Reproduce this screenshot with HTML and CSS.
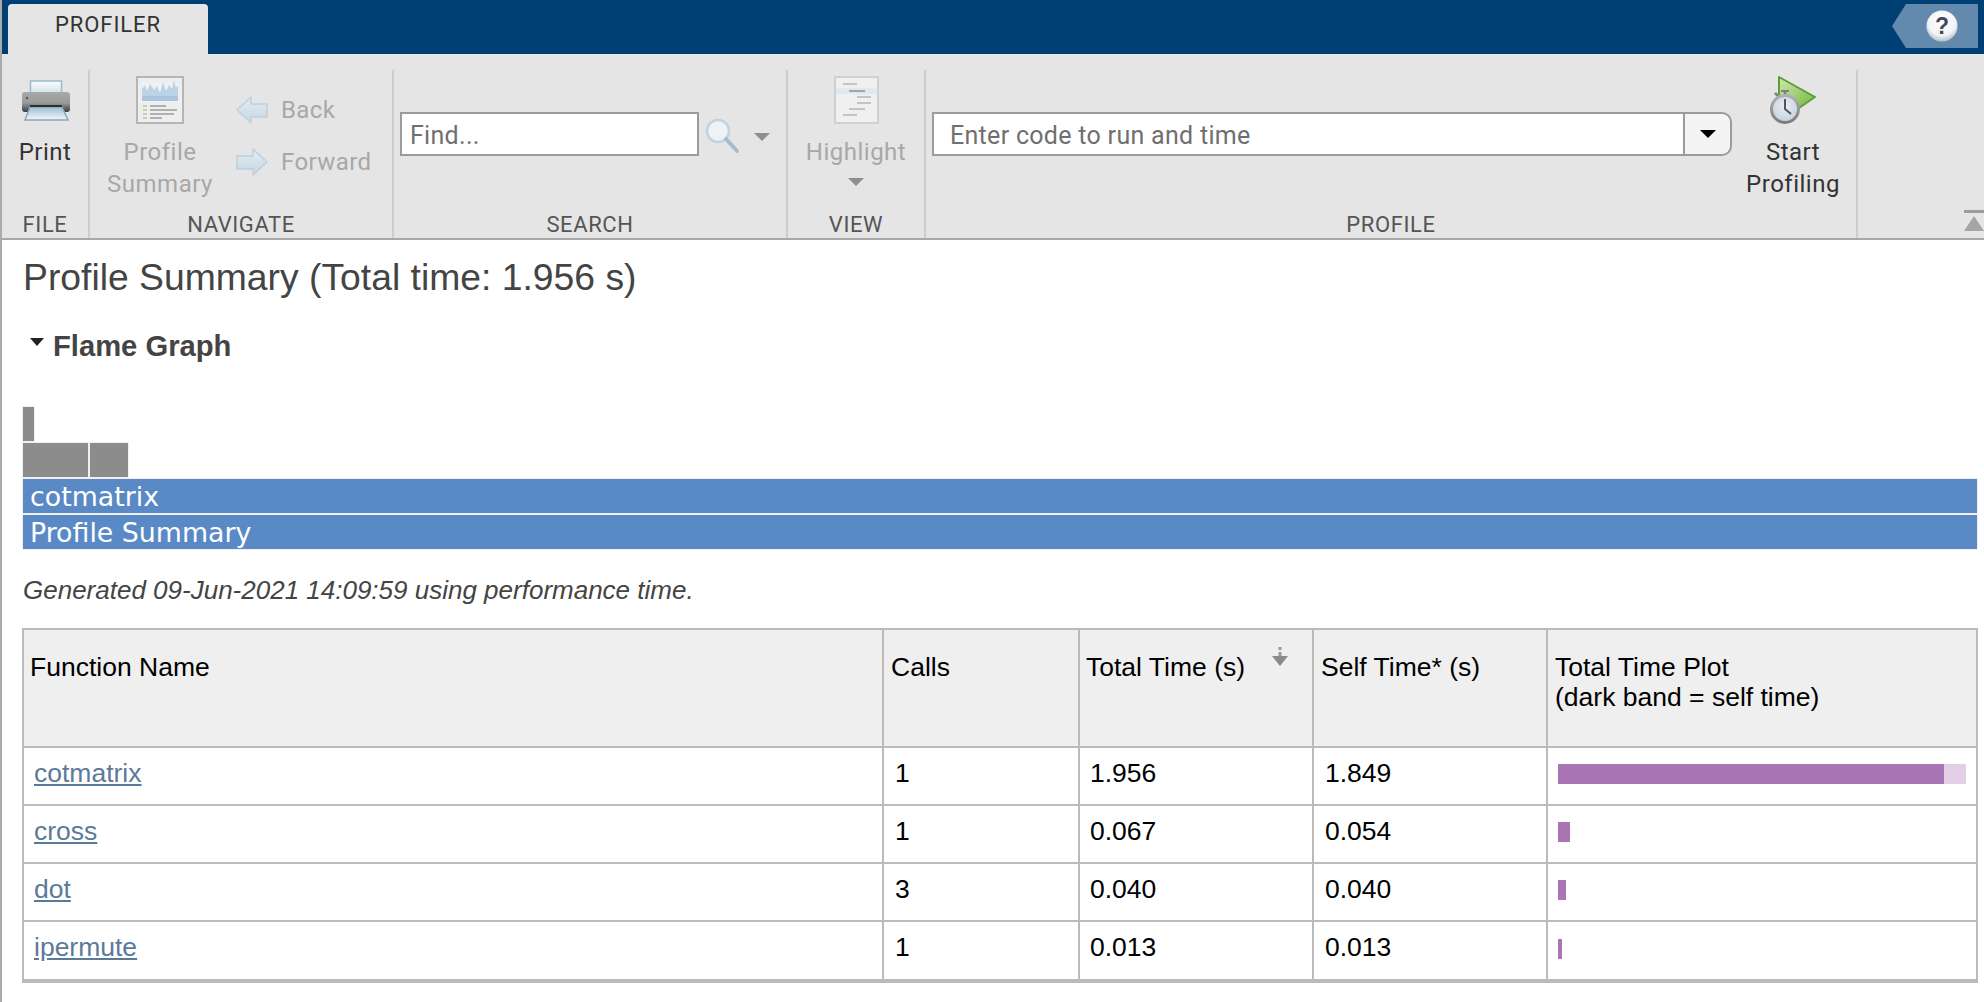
FILE: index.html
```html
<!DOCTYPE html>
<html lang="en">
<head>
    <meta charset="UTF-8">
    <meta name="viewport" content="width=device-width, initial-scale=1.0">
    <title>Profiler</title>
    <link rel="stylesheet" href="styles.css">
</head>
<body>

    <div class="topbar">
        <div class="tab">PROFILER</div>
        <div class="help">
            <svg width="86" height="44" viewBox="0 0 86 44">
                <defs>
                    <radialGradient id="helpBall" cx="50%" cy="35%" r="70%">
                        <stop offset="0" stop-color="#ffffff"/>
                        <stop offset="0.65" stop-color="#f2f3f5"/>
                        <stop offset="1" stop-color="#a9b2bf"/>
                    </radialGradient>
                </defs>
                <path d="M14 0H86V44H14L0 22Z" fill="#6389ad"/>
                <circle cx="50" cy="22" r="15.5" fill="url(#helpBall)"/>
                <text x="50" y="30" class="help-mark">?</text>
            </svg>
        </div>
    </div>

    <div class="ribbon">
        <!-- File -->
        <div class="section sec-file">
            <div class="sec-body">
                <div class="big-btn">
                    <div class="big-icon">
                        <svg width="48" height="41" viewBox="0 0 48 41">
                            <defs>
                                <linearGradient id="printerBody" x1="0" y1="0" x2="0" y2="1">
                                    <stop offset="0" stop-color="#a9a9a9"/>
                                    <stop offset="0.55" stop-color="#9a9a9a"/>
                                    <stop offset="1" stop-color="#3c3c3c"/>
                                </linearGradient>
                                <linearGradient id="printerPaper" x1="0" y1="0" x2="0" y2="1">
                                    <stop offset="0" stop-color="#9dbdd2"/>
                                    <stop offset="1" stop-color="#f2f7fa"/>
                                </linearGradient>
                                <linearGradient id="printerSheet" x1="0" y1="0" x2="0" y2="1">
                                    <stop offset="0" stop-color="#fafcfd"/>
                                    <stop offset="1" stop-color="#d3e2ec"/>
                                </linearGradient>
                            </defs>
                            <path d="M8.5 1H39.5V13H8.5Z" fill="url(#printerSheet)" stroke="#9db9cc" stroke-width="1.5"/>
                            <path d="M3 12H45Q48 12 48 15V29Q48 32 45 32H3Q0 32 0 29V15Q0 12 3 12Z" fill="url(#printerBody)"/>
                            <circle cx="5" cy="18" r="1.2" fill="#555"/>
                            <path d="M8 27H40L46 40H3Z" fill="url(#printerPaper)" stroke="#88a6ba" stroke-width="1.5"/>
                            <path d="M8 26H40" stroke="#2f2f2f" stroke-width="2"/>
                        </svg>
                    </div>
                    <div class="btn-text">Print</div>
                </div>
            </div>
            <div class="sec-label">FILE</div>
        </div>

        <!-- Navigate -->
        <div class="section sec-nav">
            <div class="sec-body nav-body">
                <div class="big-btn summary-btn disabled">
                    <div class="big-icon">
                        <svg width="48" height="48" viewBox="0 0 48 48">
                            <rect x="1" y="1" width="46" height="46" fill="#eeeeee" stroke="#b5b5b5" stroke-width="2"/>
                            <path d="M6 7H42V26H6Z" fill="#eef2f5"/>
                            <path d="M6 25V13L9 9L11 15L14 8L18 14L21 10L24 17L27 6L30 15L33 9L36 13L38 4L40 12L42 9V25Z" fill="#bcd2e5"/>
                            <path d="M6 20H42V25H6Z" fill="#a9c6de"/>
                            <path d="M7 30H11M7 34H11M7 38H11M7 42H11" stroke="#b6d8a8" stroke-width="2"/>
                            <path d="M14 30H30M14 34H41M14 38H38M14 42H26" stroke="#b0b0b0" stroke-width="2"/>
                        </svg>
                    </div>
                    <div class="btn-text">Profile<br>Summary</div>
                </div>
                <div class="nav-list">
                    <div class="nav-item disabled">
                        <svg width="32" height="28" viewBox="0 0 32 28">
                            <defs>
                                <linearGradient id="arrowFill" x1="0" y1="0" x2="0" y2="1">
                                    <stop offset="0" stop-color="#e4edf3"/>
                                    <stop offset="1" stop-color="#c3d6e4"/>
                                </linearGradient>
                            </defs>
                            <path d="M1 14L15 1V8H31V21H15V27Z" fill="url(#arrowFill)" stroke="#bfd0dc" stroke-width="1.5" stroke-linejoin="round"/>
                        </svg>
                        <span>Back</span>
                    </div>
                    <div class="nav-item disabled">
                        <svg width="32" height="28" viewBox="0 0 32 28">
                            <path d="M31 14L17 1V8H1V21H17V27Z" fill="url(#arrowFill)" stroke="#bfd0dc" stroke-width="1.5" stroke-linejoin="round"/>
                        </svg>
                        <span>Forward</span>
                    </div>
                </div>
            </div>
            <div class="sec-label">NAVIGATE</div>
        </div>

        <!-- Search -->
        <div class="section sec-search">
            <div class="sec-body search-body">
                <div class="find-box">Find...</div>
                <svg class="lens" width="34" height="36" viewBox="0 0 34 36">
                    <circle cx="13" cy="13" r="11" fill="#edf2f6" stroke="#c3d2de" stroke-width="2.5"/>
                    <path d="M21 21L32 33" stroke="#a6bccd" stroke-width="4" stroke-linecap="round"/>
                </svg>
                <span class="caret-grey search-caret"></span>
            </div>
            <div class="sec-label">SEARCH</div>
        </div>

        <!-- View -->
        <div class="section sec-view">
            <div class="sec-body">
                <div class="big-btn disabled">
                    <div class="big-icon">
                        <svg width="45" height="48" viewBox="0 0 45 48">
                            <rect x="1" y="1" width="43" height="46" fill="#f0f0f0" stroke="#d0d0d0" stroke-width="2"/>
                            <rect x="2" y="12" width="41" height="6" fill="#dfe9f0"/>
                            <path d="M9 8H23M23 21H37M23 27H37M15 33H31M9 39H23" stroke="#c4c4c4" stroke-width="2"/>
                            <path d="M15 15H31" stroke="#a4a4a4" stroke-width="2"/>
                        </svg>
                    </div>
                    <div class="btn-text">Highlight</div>
                    <span class="caret-grey view-caret"></span>
                </div>
            </div>
            <div class="sec-label">VIEW</div>
        </div>

        <!-- Profile -->
        <div class="section sec-profile">
            <div class="sec-body profile-body">
                <div class="code-box">
                    <div class="code-input">Enter code to run and time</div>
                    <div class="code-drop"><span class="caret-black"></span></div>
                </div>
                <div class="big-btn start-btn">
                    <div class="big-icon">
                        <svg width="46" height="48" viewBox="0 0 46 48">
                            <defs>
                                <linearGradient id="playFill" x1="0" y1="0" x2="1" y2="1">
                                    <stop offset="0" stop-color="#cfe9ac"/>
                                    <stop offset="1" stop-color="#74b542"/>
                                </linearGradient>
                                <radialGradient id="clockFace" cx="50%" cy="40%" r="60%">
                                    <stop offset="0" stop-color="#e6edf4"/>
                                    <stop offset="1" stop-color="#c3d2e1"/>
                                </radialGradient>
                                <linearGradient id="clockRing" x1="0" y1="0" x2="0" y2="1">
                                    <stop offset="0" stop-color="#b0b0b0"/>
                                    <stop offset="1" stop-color="#7c7c7c"/>
                                </linearGradient>
                            </defs>
                            <path d="M9 1L45 21L29 32H9Z" fill="url(#playFill)" stroke="#5d9e35" stroke-width="2" stroke-linejoin="round"/>
                            <path d="M15 15V20M5 17L8 20" stroke="#808080" stroke-width="2.5"/>
                            <path d="M11 15H19" stroke="#808080" stroke-width="2"/>
                            <circle cx="15" cy="33" r="13.5" fill="url(#clockFace)" stroke="url(#clockRing)" stroke-width="3"/>
                            <path d="M15 23V33L21 38" fill="none" stroke="#555" stroke-width="2"/>
                        </svg>
                    </div>
                    <div class="btn-text">Start<br>Profiling</div>
                </div>
            </div>
            <div class="sec-label">PROFILE</div>
        </div>

        <div class="sec-end">
            <svg width="20" height="21" viewBox="0 0 20 21">
                <rect x="0" y="0" width="20" height="3" fill="#9c9c9c"/>
                <path d="M10 6L20 21H0Z" fill="#a5a5a5"/>
            </svg>
        </div>
    </div>

    <div class="report">
        <h1>Profile Summary (Total time: 1.956 s)</h1>
        <h2><span class="twisty"></span>Flame Graph</h2>

        <div class="flame">
            <div class="flame-row"><div class="flame-cell grey w-a"></div></div>
            <div class="flame-row">
                <div class="flame-cell grey w-b"></div>
                <div class="flame-cell grey w-c"></div>
            </div>
            <div class="flame-row"><div class="flame-cell blue">cotmatrix</div></div>
            <div class="flame-row"><div class="flame-cell blue">Profile Summary</div></div>
        </div>

        <p class="generated">Generated 09-Jun-2021 14:09:59 using performance time.</p>

        <table class="results">
            <colgroup>
                <col class="col-name">
                <col class="col-calls">
                <col class="col-time">
                <col class="col-time">
                <col>
            </colgroup>
            <thead>
                <tr>
                    <th>Function Name</th>
                    <th>Calls</th>
                    <th class="sorted">Total Time (s)
                        <svg class="sort-arrow" width="16" height="20" viewBox="0 0 16 20">
                            <path d="M8 0V3M8 5V10" stroke="#9a9a9a" stroke-width="3"/>
                            <path d="M0 9H16L8 19Z" fill="#8a8a8a"/>
                        </svg>
                    </th>
                    <th>Self Time* (s)</th>
                    <th>Total Time Plot<br>(dark band = self time)</th>
                </tr>
            </thead>
            <tbody>
                <tr>
                    <td><a href="#">cotmatrix</a></td>
                    <td>1</td>
                    <td>1.956</td>
                    <td>1.849</td>
                    <td class="plot"><div class="bar"><span class="dark" style="width:386px"></span><span class="light" style="width:22px"></span></div></td>
                </tr>
                <tr>
                    <td><a href="#">cross</a></td>
                    <td>1</td>
                    <td>0.067</td>
                    <td>0.054</td>
                    <td class="plot"><div class="bar"><span class="dark" style="width:12px"></span></div></td>
                </tr>
                <tr>
                    <td><a href="#">dot</a></td>
                    <td>3</td>
                    <td>0.040</td>
                    <td>0.040</td>
                    <td class="plot"><div class="bar"><span class="dark" style="width:8px"></span></div></td>
                </tr>
                <tr>
                    <td><a href="#">ipermute</a></td>
                    <td>1</td>
                    <td>0.013</td>
                    <td>0.013</td>
                    <td class="plot"><div class="bar"><span class="dark" style="width:4px"></span></div></td>
                </tr>
            </tbody>
        </table>
    </div>

</body>
</html>
```

FILE: styles.css
```css
* {
    box-sizing: border-box;
}
html, body {
    height: 100%;
    overflow: hidden;
}
body {
    margin: 0;
    border-left: 2px solid #ababab;
    background-color: #fff;
    font-family: "Liberation Sans", Arial, sans-serif;
}

/* top bar */
.topbar {
    height: 54px;
    padding: 4px 6px 0 6px;
    background-color: #003f73;
    display: flex;
    justify-content: space-between;
}
.tab {
    width: 200px;
    height: 50px;
    padding-top: 8px;
    border-radius: 4px 4px 0 0;
    background-color: #e5e5e5;
    color: #333;
    font-family: Roboto, sans-serif;
    font-size: 22px;
    letter-spacing: 0.9px;
    text-align: center;
}
.help svg {
    display: block;
}
.help-mark {
    font-family: "Liberation Sans", sans-serif;
    font-size: 23px;
    font-weight: bold;
    fill: #3f4a5c;
    text-anchor: middle;
}

/* ribbon */
.ribbon {
    height: 186px;
    padding-top: 16px;
    background-color: #e5e5e5;
    border-bottom: 2px solid #a8a8a8;
    display: flex;
    font-family: Roboto, sans-serif;
    font-size: 24px;
    color: #333;
}
.section {
    border-right: 2px solid #cdcdcd;
    display: flex;
    flex-direction: column;
}
.sec-file { width: 88px; }
.sec-nav { width: 304px; }
.sec-search { width: 394px; }
.sec-view { width: 138px; }
.sec-profile { width: 932px; }
.sec-body {
    flex: 1;
    padding-top: 6px;
    display: flex;
}
.sec-label {
    height: 30px;
    color: #555;
    font-size: 22px;
    line-height: 33px;
    letter-spacing: 0.6px;
    text-align: center;
}
.sec-end {
    flex: 1;
    padding-bottom: 7px;
    display: flex;
    justify-content: flex-end;
    align-items: flex-end;
}
.sec-end svg {
    display: block;
}
.big-btn {
    width: 100%;
    text-align: center;
    line-height: 32px;
}
.big-icon {
    height: 60px;
}
.big-icon svg {
    display: block;
    margin: 0 auto;
}
.sec-file .big-icon {
    padding: 4px 0 0 2px;
}
.btn-text {
    letter-spacing: 0.5px;
}
.disabled {
    color: #a8a8a8;
}

.nav-body {
    padding-left: 12px;
}
.summary-btn {
    width: 116px;
}
.nav-list {
    margin-left: 18px;
    padding-top: 18px;
    display: flex;
    flex-direction: column;
    gap: 20px;
}
.nav-item {
    height: 32px;
    display: flex;
    align-items: center;
    gap: 13px;
    letter-spacing: 0.4px;
}

.search-body {
    padding: 42px 0 0 6px;
    align-items: flex-start;
}
.find-box {
    width: 299px;
    height: 44px;
    padding-left: 8px;
    border: 2px solid #9b9b9b;
    background-color: #fff;
    color: #6f6f6f;
    font-size: 25px;
    line-height: 44px;
    letter-spacing: 0.3px;
}
.lens {
    margin: 6px 0 0 6px;
}
.search-caret {
    margin: 21px 0 0 15px;
}
.caret-grey {
    display: inline-block;
    width: 0;
    height: 0;
    border-left: 8px solid transparent;
    border-right: 8px solid transparent;
    border-top: 8px solid #8f8f8f;
}
.view-caret {
    display: block;
    margin: 10px auto 0 auto;
}

.profile-body {
    padding-left: 6px;
    align-items: flex-start;
}
.code-box {
    width: 800px;
    height: 44px;
    margin-top: 36px;
    border: 2px solid #9b9b9b;
    border-radius: 0 10px 10px 0;
    background-color: #f4f4f4;
    display: flex;
    overflow: hidden;
}
.code-input {
    width: 751px;
    padding-left: 16px;
    border-right: 2px solid #9b9b9b;
    background-color: #fff;
    color: #6f6f6f;
    font-size: 25px;
    line-height: 44px;
    letter-spacing: 0.3px;
}
.code-drop {
    flex: 1;
    display: flex;
    justify-content: center;
    align-items: center;
}
.caret-black {
    width: 0;
    height: 0;
    border-left: 8px solid transparent;
    border-right: 8px solid transparent;
    border-top: 8px solid #000;
}
.start-btn {
    width: 122px;
}

/* report */
.report {
    padding: 17px 6px 0 20px;
    color: #444;
}
h1 {
    margin: 0 0 0 1px;
    font-size: 37.3px;
    font-weight: normal;
    line-height: 40px;
}
h2 {
    margin: 29px 0 0 8px;
    font-size: 29.2px;
    line-height: 40px;
    display: flex;
    align-items: center;
}
.twisty {
    width: 0;
    height: 0;
    margin: 0 9px 8px 0;
    border-left: 7px solid transparent;
    border-right: 7px solid transparent;
    border-top: 8px solid #222;
}

.flame {
    margin-top: 40px;
}
.flame-row {
    height: 36px;
    display: flex;
}
.flame-cell {
    height: 36px;
    border: 1px solid #f0f0f0;
}
.grey {
    background-color: #8c8c8c;
}
.blue {
    flex: 1;
    padding-left: 7px;
    background-color: #5a8ac6;
    color: #fff;
    font-family: "DejaVu Sans", sans-serif;
    font-size: 26.8px;
    line-height: 35px;
}
.w-a { width: 13px; }
.w-b { width: 67px; }
.w-c { width: 40px; }

.generated {
    margin: 22px 0 0 1px;
    font-size: 26px;
    font-style: italic;
    line-height: 36px;
}

.results {
    width: 1956px;
    margin-top: 20px;
    border-collapse: collapse;
    table-layout: fixed;
    border-bottom: 4px solid #bbb;
    color: #000;
    font-size: 26.5px;
}
.col-name { width: 860px; }
.col-calls { width: 196px; }
.col-time { width: 234px; }
.results th, .results td {
    border: 2px solid #bbb;
}
.results th {
    height: 118px;
    padding: 22px 6px 0 6px;
    background-color: #efefef;
    font-weight: normal;
    text-align: left;
    vertical-align: top;
    line-height: 30px;
}
.results td {
    height: 58px;
    padding: 0 10px 6px 10px;
}
.results tbody tr:last-child td {
    height: 60px;
}
.results th:nth-child(2), .results th:nth-child(4), .results th:nth-child(5) {
    padding-left: 7px;
}
.results td:nth-child(2), .results td:nth-child(4) {
    padding-left: 11px;
}
.results a {
    color: #5b7a9a;
}
.sorted {
    position: relative;
}
.sort-arrow {
    position: absolute;
    top: 17px;
    right: 24px;
}
.results .plot {
    padding-bottom: 4px;
    vertical-align: middle;
}
.bar {
    height: 20px;
    display: flex;
}
.bar span {
    display: block;
    height: 20px;
}
.dark {
    background-color: #aa75b4;
}
.light {
    background-color: #e2cfe5;
}
```
